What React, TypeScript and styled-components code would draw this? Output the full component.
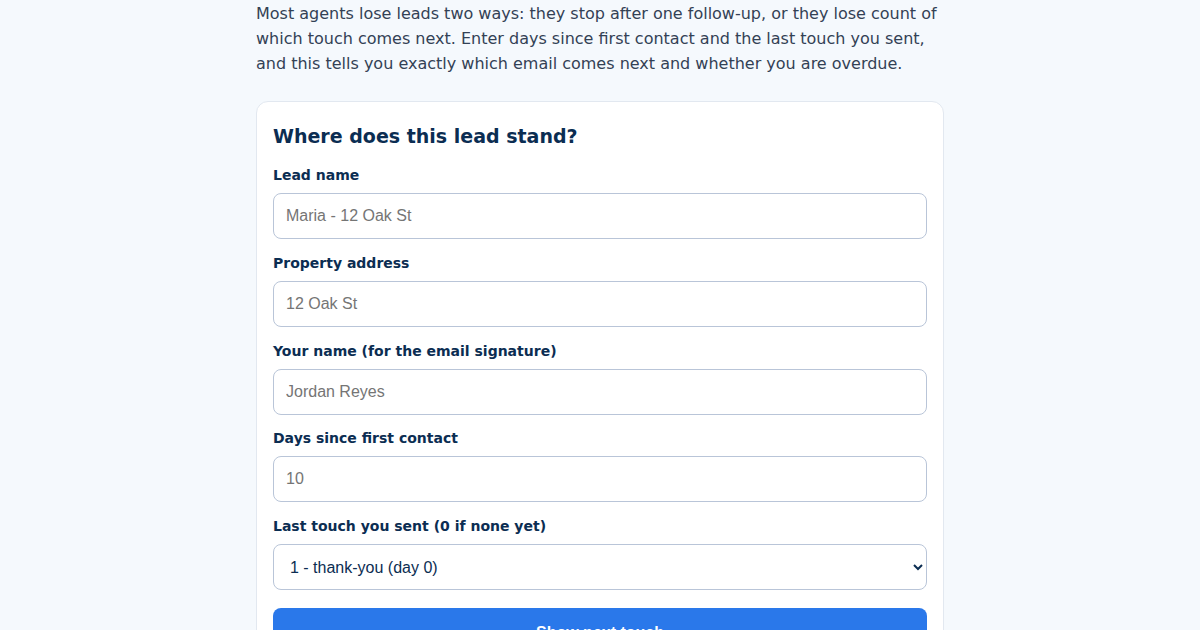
import styled, { createGlobalStyle } from "styled-components";

const GlobalStyle = createGlobalStyle`
  html, body {
    margin: 0;
    background: #f5f9fd;
  }
  body {
    font-family: "DejaVu Sans", sans-serif;
    color: #334155;
  }
`;

const Page = styled.main`
  max-width: 688px;
  margin: 0 auto;
  padding-top: 1px;
`;

const Intro = styled.p`
  margin: 0 0 25px;
  font-size: 16px;
  line-height: 25px;
  color: #334155;
`;

const Card = styled.section`
  background: #ffffff;
  border: 1px solid #e2e8f0;
  border-radius: 12px;
  padding: 21px 16px 16px;
`;

const Heading = styled.h2`
  margin: 0 0 16px;
  font-size: 19px;
  line-height: 26px;
  color: #0b2d52;
`;

const Field = styled.div`
  display: flex;
  flex-direction: column;
  margin-bottom: 13.75px;
`;

const Label = styled.label`
  font-size: 14px;
  font-weight: bold;
  line-height: 20px;
  color: #0b2d52;
  margin-bottom: 8px;
`;

const TextInput = styled.input`
  box-sizing: border-box;
  height: 46px;
  padding: 0 12px;
  border: 1px solid #b9c5d8;
  border-radius: 8px;
  font-family: "Liberation Sans", Arial, sans-serif;
  font-size: 16px;
  color: #0b2d52;
  background: #ffffff;

  &::placeholder {
    color: #757575;
  }
`;

const Select = styled.select`
  box-sizing: border-box;
  height: 46px;
  padding: 0 8px 0 12px;
  border: 1px solid #b9c5d8;
  border-radius: 8px;
  font-family: "Liberation Sans", Arial, sans-serif;
  font-size: 16px;
  color: #0b2d52;
  background: #ffffff;
`;

const Button = styled.button`
  width: 100%;
  height: 50px;
  margin-top: 4px;
  border: 0;
  border-radius: 8px;
  background: #2a78ea;
  color: #ffffff;
  font-family: "Liberation Sans", Arial, sans-serif;
  font-size: 16px;
  font-weight: bold;
`;

const fields = [
  { id: "lead", label: "Lead name", placeholder: "Maria - 12 Oak St" },
  { id: "address", label: "Property address", placeholder: "12 Oak St" },
  { id: "agent", label: "Your name (for the email signature)", placeholder: "Jordan Reyes" },
  { id: "days", label: "Days since first contact", placeholder: "10" },
];

const touches = [
  "0 - none yet",
  "1 - thank-you (day 0)",
  "2 - check-in (day 3)",
  "3 - market update (day 7)",
  "4 - value add (day 14)",
];

const App = () => {
  return (
    <>
      <GlobalStyle />
      <Page>
        <Intro>
          Most agents lose leads two ways: they stop after one follow-up, or they lose count of
          which touch comes next. Enter days since first contact and the last touch you sent,
          and this tells you exactly which email comes next and whether you are overdue.
        </Intro>
        <Card>
          <Heading>Where does this lead stand?</Heading>
          {fields.map((f) => (
            <Field key={f.id}>
              <Label htmlFor={f.id}>{f.label}</Label>
              <TextInput id={f.id} placeholder={f.placeholder} />
            </Field>
          ))}
          <Field>
            <Label htmlFor="touch">Last touch you sent (0 if none yet)</Label>
            <Select id="touch" defaultValue={touches[1]}>
              {touches.map((t) => (
                <option key={t}>{t}</option>
              ))}
            </Select>
          </Field>
          <Button type="button">Show next touch</Button>
        </Card>
      </Page>
    </>
  );
};

export default App;
